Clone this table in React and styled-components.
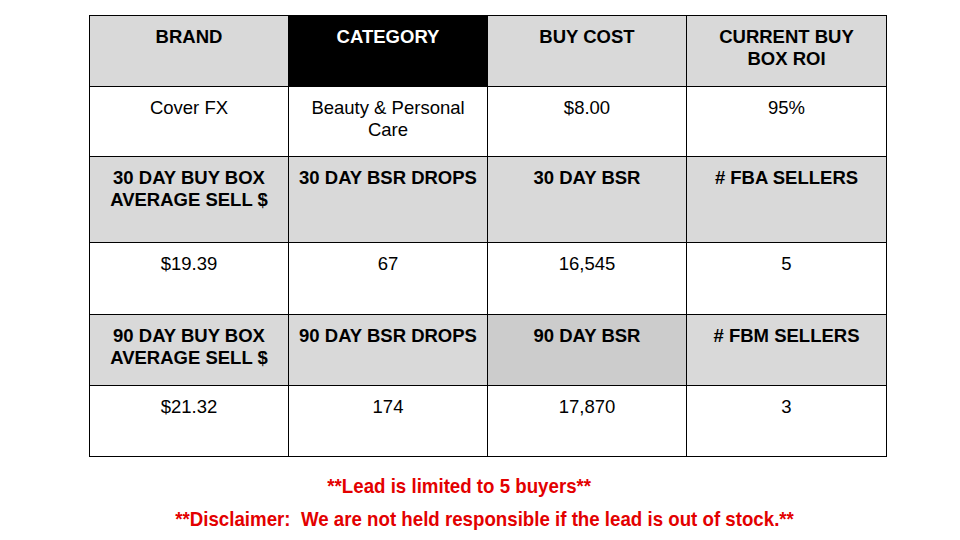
import React from 'react';
import styled, { createGlobalStyle } from 'styled-components';

const GlobalStyle = createGlobalStyle`
    html, body {
        margin: 0;
        padding: 0;
        background: #fff;
    }
    body {
        width: 960px;
        height: 540px;
        overflow: hidden;
        font-family: 'Liberation Sans', Arial, sans-serif;
    }
`;

const Page = styled.div`
    width: 960px;
    height: 540px;
    padding: 15px 0 0 89px;
    box-sizing: border-box;
`;

const Grid = styled.div`
    display: grid;
    grid-template-columns: 199px 199px 199px 200px;
    grid-template-rows: 71px 70px 86px 72px 71px 71px;
    width: 798px;
    border-top: 1px solid #000;
    border-left: 1px solid #000;
    box-sizing: border-box;
`;

const Cell = styled.div`
    box-sizing: border-box;
    border-right: 1px solid #000;
    border-bottom: 1px solid #000;
    padding: 10px 4px 0;
    text-align: center;
    white-space: pre-line;
    font-size: 18.5px;
    line-height: 22px;
    font-weight: ${({ $head }) => ($head ? 700 : 400)};
    color: ${({ $dark }) => ($dark ? '#fff' : '#000')};
    background-color: ${({ $head, $dark, $shade }) =>
        $dark ? '#000' : $shade ? '#cccccc' : $head ? '#d9d9d9' : '#fff'};
`;

const Notes = styled.div`
    width: 798px;
    display: flex;
    flex-direction: column;
    align-items: center;
    margin-top: 17px;
    gap: 9px;
    font-weight: 700;
    font-size: 21px;
    line-height: 24px;
    color: #e30000;
`;

const Note = styled.div`
    margin-right: ${({ $shift }) => $shift || 0}px;
    white-space: nowrap;
    transform: scaleX(0.89);
`;

const rows = [
    { head: true, cells: ['BRAND', 'CATEGORY', 'BUY COST', 'CURRENT BUY\nBOX ROI'] },
    { cells: ['Cover FX', 'Beauty & Personal\nCare', '$8.00', '95%'] },
    { head: true, cells: ['30 DAY BUY BOX\nAVERAGE SELL $', '30 DAY BSR DROPS', '30 DAY BSR', '# FBA SELLERS'] },
    { cells: ['$19.39', '67', '16,545', '5'] },
    { head: true, cells: ['90 DAY BUY BOX\nAVERAGE SELL $', '90 DAY BSR DROPS', '90 DAY BSR', '# FBM SELLERS'] },
    { cells: ['$21.32', '174', '17,870', '3'] },
];

const App = () => (
    <>
        <GlobalStyle />
        <Page>
            <Grid>
                {rows.map((row, r) =>
                    row.cells.map((text, c) => (
                        <Cell
                            key={`${r}-${c}`}
                            $head={row.head}
                            $dark={r === 0 && c === 1}
                            $shade={r === 4 && c === 2}
                        >
                            {text}
                        </Cell>
                    ))
                )}
            </Grid>
            <Notes>
                <Note $shift={58}>**Lead is limited to 5 buyers**</Note>
                <Note $shift={6}>**Disclaimer:&nbsp; We are not held responsible if the lead is out of stock.**</Note>
            </Notes>
        </Page>
    </>
);

export default App;
